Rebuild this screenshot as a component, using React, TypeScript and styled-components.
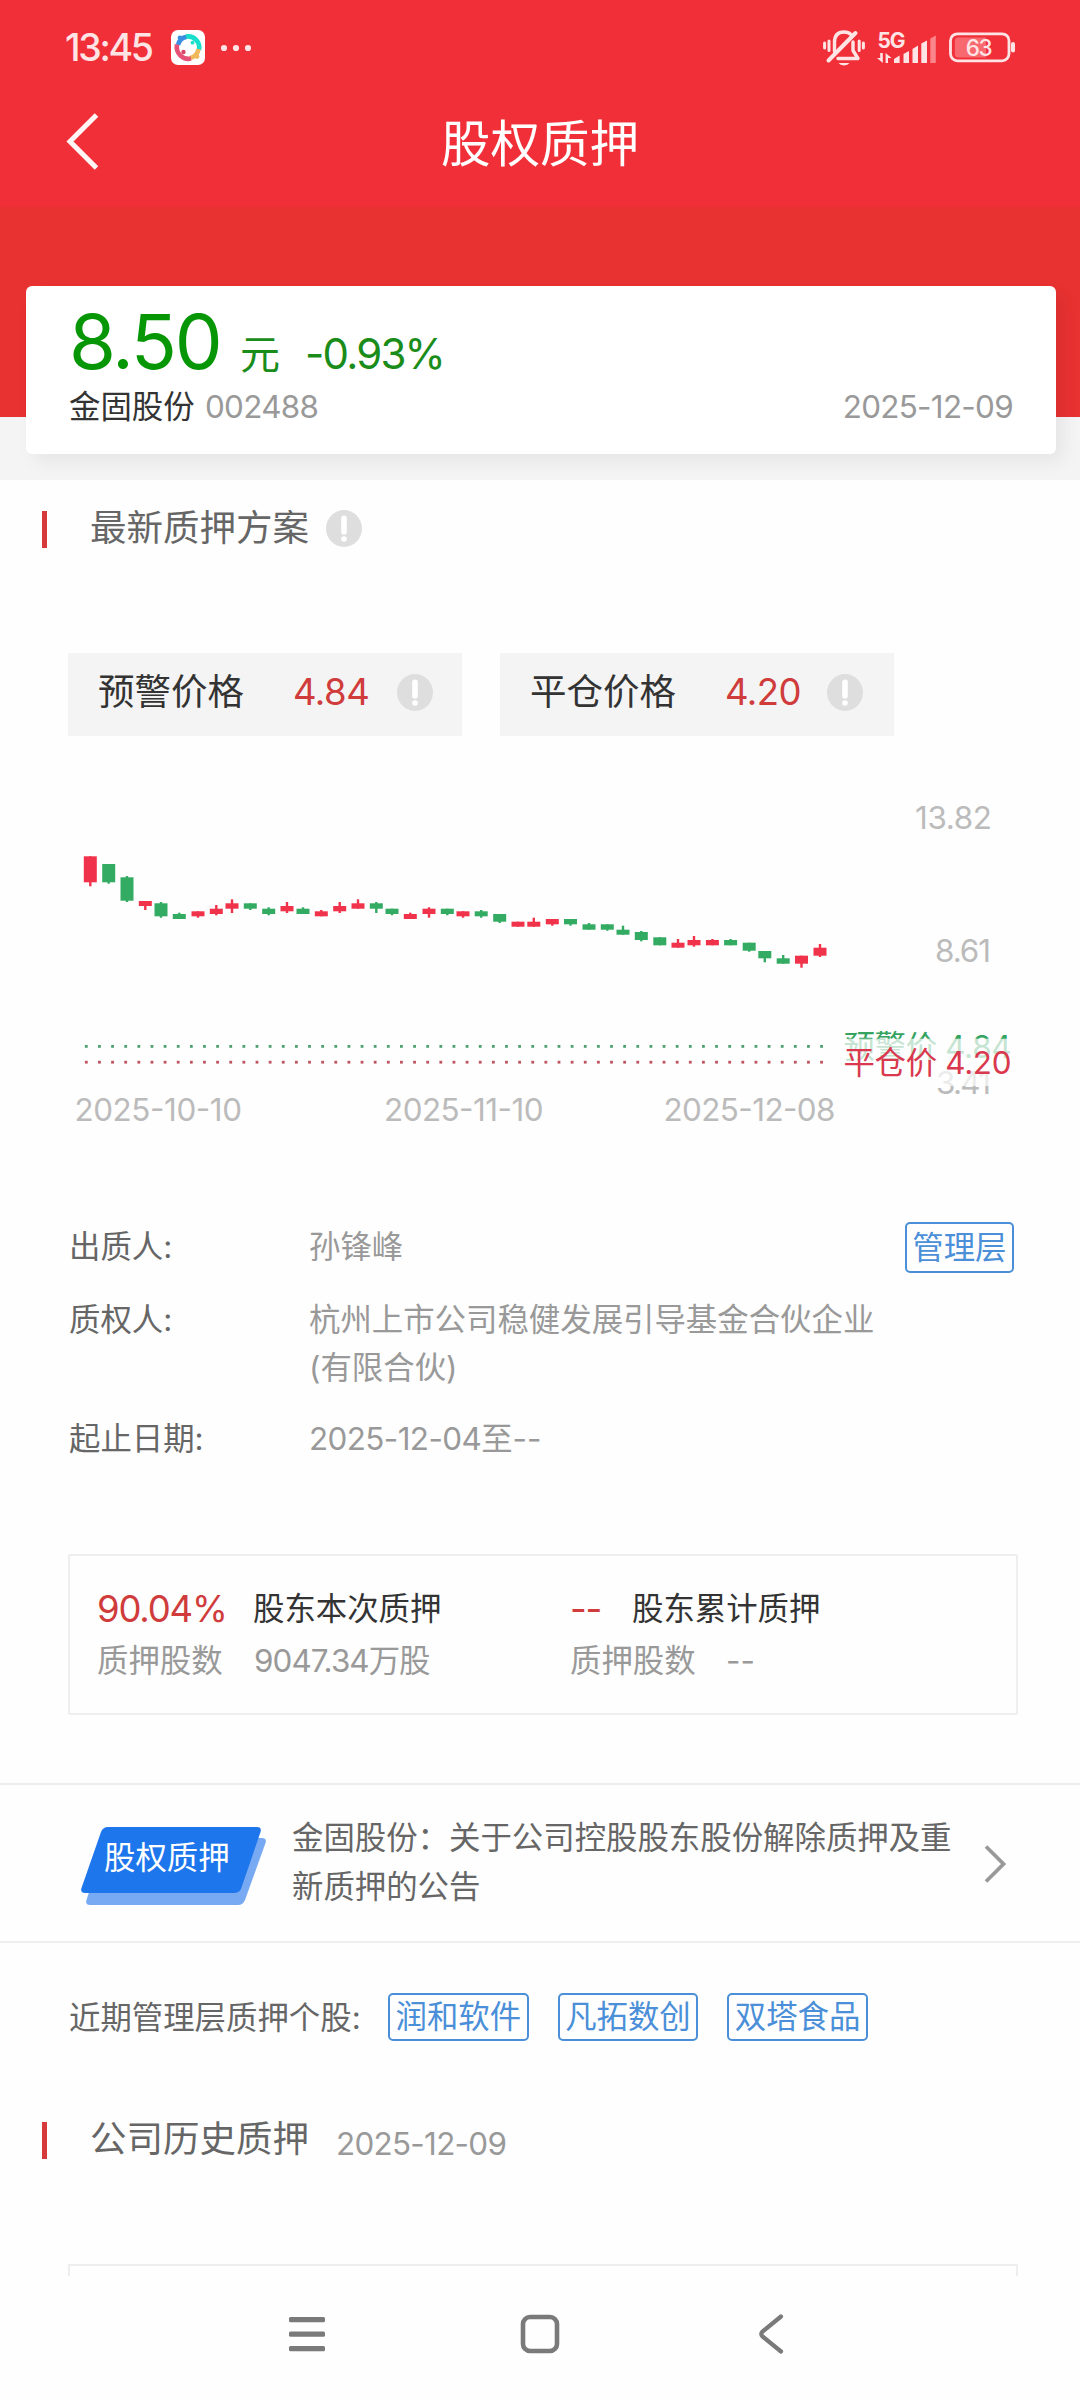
import React from "react";
import styled, { createGlobalStyle } from "styled-components";

const GlobalStyle = createGlobalStyle`
  * { box-sizing: border-box; }
  body {
    margin: 0;
    background: #fefefe;
    font-family: Inter, "Noto Sans CJK SC", sans-serif;
    font-size: 31.42px;
    color: #666;
  }
`;

const Screen = styled.div`
  width: 1080px;
  height: 2400px;
  overflow: hidden;
  display: flex;
  flex-direction: column;
  background: #fefefe;
  white-space: nowrap;
`;

/* ---------- header ---------- */

const Header = styled.header`
  height: 207px;
  background: #f12f38;
  color: #fff;
`;

const StatusBar = styled.div`
  height: 95px;
  padding: 0 64px 0 65px;
  display: flex;
  align-items: center;
  justify-content: space-between;
`;

const StatusGroup = styled.div<{ $gap: number }>`
  display: flex;
  align-items: center;
  gap: ${(p) => p.$gap}px;
`;

const Clock = styled.span`
  width: 91px;
  font-size: 37.5px;
  font-weight: 500;
  line-height: 40px;
  letter-spacing: -2.3px;
  color: #ffe4e6;
`;

const TitleBar = styled.div`
  height: 98px;
  display: grid;
  grid-template-columns: 150px 1fr 150px;
  align-items: center;
`;

const BackButton = styled.button`
  border: 0;
  background: none;
  padding: 0 0 4px 65px;
  line-height: 0;
  text-align: left;
`;

const Title = styled.h1`
  margin: 0;
  font-size: 49.5px;
  font-weight: 400;
  line-height: 60px;
  text-align: center;
`;

/* ---------- quote ---------- */

const Hero = styled.section`
  height: 273px;
  padding: 79px 24px 0 26px;
  background: linear-gradient(#e83131 0 210px, #f4f4f4 210px);
`;

const QuoteCard = styled.div`
  height: 168px;
  padding: 12px 43px 0 43px;
  border-radius: 6px;
  background: #fff;
  box-shadow: 8px 8px 18px rgba(0, 0, 0, 0.06);
`;

const PriceLine = styled.div`
  display: flex;
  align-items: baseline;
  height: 88px;
  line-height: 86px;
  color: #1a8c1a;
`;

const Price = styled.span`
  width: 171px;
  font-size: 76px;
  letter-spacing: -2.2px;
  color: #069606;
`;

const Unit = styled.span`
  width: 65px;
  font-size: 40px;
`;

const Change = styled.span`
  font-size: 42px;
  letter-spacing: -1.8px;
`;

const NameLine = styled.div`
  display: flex;
  align-items: center;
  height: 43px;
  line-height: 43px;
`;

const StockName = styled.span`
  width: 136px;
  color: #333;
`;

const Muted = styled.span<{ $spacing?: number }>`
  color: #999;
  letter-spacing: ${(p) => p.$spacing ?? 0}px;
`;

const QuoteDate = styled(Muted)`
  margin-left: auto;
`;

/* ---------- section heading ---------- */

const Heading = styled.h2<{ $top: number; $bottom: number }>`
  margin: ${(p) => p.$top}px 0 ${(p) => p.$bottom}px 42px;
  height: 37px;
  display: flex;
  align-items: center;
  font-weight: 400;
  &::before {
    content: "";
    width: 5px;
    height: 37px;
    margin-right: 43px;
    background: #d63a3a;
  }
`;

const HeadingText = styled.span`
  font-size: 36.5px;
  line-height: 36px;
  padding-bottom: 3px;
`;

const HeadingDate = styled(Muted)`
  margin: 6px 0 0 27px;
  font-size: 31.4px;
`;

const InfoIcon = styled.svg`
  width: 36px;
  height: 37px;
  display: block;
`;

const HeadingIcon = styled.div`
  margin: -2px 0 0 17px;
`;

/* ---------- price boxes ---------- */

const PriceBoxes = styled.div`
  display: flex;
  gap: 38px;
  margin-left: 68px;
`;

const PriceBox = styled.div`
  width: 394px;
  height: 83px;
  padding: 0 29px 5px 30px;
  display: flex;
  align-items: center;
  background: #f4f4f4;
  color: #333;
`;

const BoxLabel = styled.span`
  font-size: 36.5px;
  line-height: 40px;
  padding-bottom: 1px;
`;

const BoxValue = styled.span<{ $width: number }>`
  width: ${(p) => p.$width}px;
  margin-left: 49px;
  font-size: 36.5px;
  color: #d03b3b;
  letter-spacing: -0.5px;
`;

/* ---------- chart ---------- */

const ChartArea = styled.div`
  height: 412px;
  margin-top: 44px;
  svg { display: block; }
`;

/* ---------- details ---------- */

const Details = styled.dl`
  margin: 30px 66px 0 69px;
`;

const DetailRow = styled.div<{ $height: number }>`
  display: grid;
  grid-template-columns: 240px 1fr auto;
  height: ${(p) => p.$height}px;
  align-items: start;
  line-height: 48px;
`;

const DetailLabel = styled.dt`
  padding-top: 1px;
`;

const DetailValue = styled.dd`
  margin: 0;
  padding-top: 1px;
  color: #999;
`;

const Tag = styled.span<{ $height: number }>`
  height: ${(p) => p.$height}px;
  padding: 0 5.5px;
  display: flex;
  align-items: center;
  border: 2.4px solid #4a8fd8;
  border-radius: 5px;
  color: #4a8fd8;
  line-height: 40px;
`;

/* ---------- share summary ---------- */

const Summary = styled.section`
  width: 950px;
  height: 161px;
  margin: 91px 0 0 68px;
  padding: 27px 0 0 27px;
  border: 2px solid #eee;
  border-radius: 2px;
  display: grid;
  grid-template-columns: 473px 1fr;
  align-content: start;
`;

const Stat = styled.div<{ $first: number }>`
  display: grid;
  grid-template-columns: ${(p) => p.$first}px 1fr;
  align-items: center;
  height: 52px;
  line-height: 52px;
  color: #333;
`;

const StatSub = styled(Stat)`
  color: #999;
`;

const Percent = styled.span`
  font-size: 36.5px;
  letter-spacing: -1.2px;
  color: #d03b3b;
`;

/* ---------- announcement ---------- */

const News = styled.section`
  height: 160px;
  margin-top: 68px;
  padding: 0 73px 0 81px;
  display: flex;
  align-items: center;
  border-top: 2px solid #eee;
  border-bottom: 2px solid #eee;
`;

const Badge = styled.div`
  position: relative;
  width: 185px;
  height: 78px;
  margin: 5px 26px 0 0;
`;

const BadgeShape = styled.svg`
  position: absolute;
  inset: 0;
`;

const BadgeText = styled.span`
  position: relative;
  display: block;
  padding-left: 23px;
  line-height: 62px;
  color: #fff;
`;

const NewsText = styled.p`
  margin: 0 auto 0 0;
  line-height: 49px;
`;

/* ---------- related ---------- */

const Related = styled.section`
  height: 49px;
  margin: 49px 0 0 69px;
  display: flex;
  align-items: center;
`;

const RelatedLabel = styled.span`
  width: 319px;
  padding-bottom: 2px;
`;

const TagList = styled.div`
  display: flex;
  gap: 29px;
`;

const HistoryBox = styled.div`
  width: 950px;
  height: 12px;
  margin-left: 68px;
  border: 2px solid #eee;
  border-bottom: 0;
`;

const NavBar = styled.nav`
  height: 124px;
  padding: 38px 296px 0 288px;
  display: grid;
  grid-template-columns: 232px 1fr auto;
  align-items: start;
`;

/* ---------- drawings ---------- */

const Info = () => (
  <InfoIcon viewBox="0 0 36 37">
    <ellipse cx="18" cy="18.5" rx="18" ry="18.5" fill="#dedede" />
    <rect x="15.2" y="5.5" width="5.6" height="19" rx="2.6" fill="#fff" />
    <circle cx="18" cy="29" r="2.8" fill="#fff" />
  </InfoIcon>
);

const AppIcon = () => (
  <svg width="34" height="35" viewBox="0 0 34 35">
    <rect width="34" height="35" rx="7" fill="#fff" />
    <g fill="none" strokeWidth="4.6">
      <path d="M7 15 A11 11 0 0 1 16 6.8" stroke="#3b8fe0" />
      <path d="M15 6.6 A11.2 11.2 0 0 1 28 20" stroke="#18dfcb" />
      <path d="M27.5 19 A11 11 0 0 1 19 28" stroke="#efb95c" />
      <path d="M6 14.5 A12 12 0 0 0 20 28.6" stroke="#e65276" />
    </g>
    <circle cx="9" cy="8" r="2.4" fill="#3b8fe0" />
    <circle cx="26" cy="26.5" r="2.4" fill="#efb95c" />
    <circle cx="21.5" cy="12.7" r="1.9" fill="#18dfcb" />
    <circle cx="12.5" cy="22" r="2.2" fill="#d94468" />
  </svg>
);

const MoreDots = () => (
  <svg width="32" height="8" viewBox="0 0 32 8" fill="#ffe4e6">
    <circle cx="4" cy="4" r="3.1" />
    <circle cx="16" cy="4" r="3.1" />
    <circle cx="28" cy="4" r="3.1" />
  </svg>
);

const MuteIcon = () => (
  <svg width="42" height="38" viewBox="0 0 42 38" fill="none" stroke="#ffe4e6" strokeWidth="3.4" strokeLinecap="round">
    <path d="M11.5 22.5 V13.5 C11.5 6 15.5 3 21 3 C24 3 26.5 4 28 5.6" />
    <path d="M30 13 V21.5 L35 29.5 H15" strokeLinejoin="round" />
    <path d="M5.5 31.5 L32.5 4" strokeWidth="4" />
    <path d="M15.5 34 A6 4 0 0 0 26.5 34 Z" fill="#ffe4e6" stroke="none" />
    <path d="M1.6 14 V19 M6 12 V21.5 M36.2 12 V21.5 M40.4 14 V19" strokeWidth="3" />
  </svg>
);

const NetworkIcon = styled.svg`
  overflow: visible;
`;

const SignalIcon = () => (
  <NetworkIcon width="60" height="34" viewBox="0 0 60 34" fill="#ffe4e6">
    <text x="0.5" y="17" fontSize="21" fontWeight="700" letterSpacing="-1.2" fontFamily="Inter, sans-serif">5G</text>
    <path d="M3.2 22 H5.8 V32 L0 27 H3.2 Z M8.6 22 L14.6 27 H11 V32 H8.6 Z" />
    <path d="M17 28 L22.6 24.5 V32 H17 Z M26.5 23 L32 20 V32 H26.5 Z M35.5 18 L41 14.5 V32 H35.5 Z M44.3 12.5 L50 9.5 V32 H44.3 Z" />
    <path d="M53.3 7.5 L58.8 4.5 V32 H53.3 Z" fill="#fa858b" />
  </NetworkIcon>
);

const BatteryIcon = () => (
  <svg width="67" height="31" viewBox="0 0 67 31">
    <rect x="1.5" y="1.8" width="58.5" height="27" rx="7" fill="none" stroke="#ffe4e6" strokeWidth="2.8" />
    <path d="M9 5.5 H37 V25.5 H9 Q5.8 25.5 5.8 22 V9 Q5.8 5.5 9 5.5 Z" fill="#f7696f" />
    <rect x="62" y="10" width="4" height="10.5" rx="2" fill="#ffe4e6" />
    <text x="29.5" y="23.5" textAnchor="middle" fontSize="22.5" fontWeight="500" letterSpacing="-1.4" fontFamily="Inter, sans-serif" fill="#ffe4e6">63</text>
  </svg>
);

/* x centre, body top, body bottom, wick top, wick bottom, rising */
type Candle = [number, number, number, number, number, boolean];

const candles: Candle[] = [
  [90.3, 76.3, 102.3, 76.3, 106.3, true],
  [108.7, 84, 102.3, 84, 103.7, false],
  [127, 97.3, 120.7, 96, 122, false],
  [145.3, 121, 126, 121, 130, true],
  [161, 123.3, 136.3, 122, 137.7, false],
  [179.3, 134, 139, 132.7, 139, false],
  [198, 131.3, 136.3, 131.3, 137.7, true],
  [216.3, 128.7, 134, 125, 135.3, true],
  [232, 123.3, 128.7, 119.3, 133, true],
  [250.3, 123.3, 128.7, 123.3, 130, false],
  [268.7, 128.7, 134, 127.3, 135.3, false],
  [287, 126, 131.3, 122, 133, true],
  [303, 128.7, 134, 127.3, 134, false],
  [321.3, 131.3, 136.3, 130, 136.3, true],
  [339.7, 126, 131.3, 122, 133, true],
  [358, 123.3, 128.7, 119.3, 128.7, true],
  [376.3, 123.3, 128.7, 122, 133, false],
  [392, 128.7, 134, 128.7, 135.3, false],
  [410.3, 134, 139, 132.7, 139, true],
  [429, 128.7, 134, 127.3, 137.7, true],
  [447.3, 128.7, 134, 128.7, 135.3, false],
  [463, 131.3, 136.3, 131.3, 137.7, true],
  [481.2, 131.3, 136.3, 130, 137.7, false],
  [499.7, 134, 141.7, 134, 143, false],
  [518, 141.7, 146.7, 141.7, 146.7, true],
  [533.8, 141.7, 146.7, 137.7, 146.7, true],
  [552.3, 139, 144.3, 139, 145.7, true],
  [570.5, 139, 144.3, 139, 145.7, false],
  [589, 144.3, 149.7, 143, 149.7, false],
  [607.3, 144.3, 149.7, 144.3, 150.7, false],
  [623, 149.7, 154.7, 145.7, 154.7, false],
  [641.3, 152, 160, 151, 161.3, false],
  [659.8, 157.3, 165.3, 157.3, 165.3, false],
  [678, 162.7, 167.7, 159, 167.7, true],
  [694, 160, 165.3, 156, 166.7, true],
  [712.4, 160, 165.3, 159, 165.3, true],
  [730.6, 160, 165.3, 159, 165.3, false],
  [749.2, 162.7, 170.7, 162.7, 171.7, false],
  [764.8, 171, 178.3, 171, 182.3, false],
  [783.2, 178.3, 183.7, 175, 183.7, false],
  [801.5, 175.7, 183.7, 175.7, 187.7, true],
  [820, 167.7, 175.7, 164, 177, true],
];

const dots = Array.from({ length: 57 }, (_, i) => 86.3 + i * 13.13);

const Chart = () => (
  <svg width="1080" height="412" viewBox="0 0 1080 412" fontFamily='Inter, "Noto Sans CJK SC", sans-serif' fontSize="31.4">
    {candles.map(([x, top, bottom, high, low, up]) => (
      <g key={x} fill={up ? "#f0324b" : "#33ab62"}>
        <rect x={x - 6.5} y={top} width="13" height={bottom - top} />
        <rect x={x - 1.2} y={high} width="2.4" height={low - high} />
      </g>
    ))}
    {dots.map((x) => (
      <g key={x}>
        <rect x={x - 1.4} y="265" width="2.8" height="2.8" fill="#4fa071" />
        <rect x={x - 1.4} y="280.8" width="2.8" height="2.8" fill="#bd5560" />
      </g>
    ))}
    <g fill="#bbb">
      <text x="915" y="48.8" textLength="77" lengthAdjust="spacing">13.82</text>
      <text x="935" y="181.8" textLength="56" lengthAdjust="spacing">8.61</text>
      <text x="936" y="313.8" textLength="55" lengthAdjust="spacing">3.41</text>
      <text x="74.5" y="341" textLength="167.5" lengthAdjust="spacing">2025-10-10</text>
      <text x="384" y="341" textLength="159.5" lengthAdjust="spacing">2025-11-10</text>
      <text x="663.5" y="341" textLength="172" lengthAdjust="spacing">2025-12-08</text>
    </g>
    <rect x="840" y="243" width="173" height="47" fill="#fefefe" fillOpacity="0.7" />
    <text x="843.5" y="278" textLength="168" lengthAdjust="spacing" fill="#33a35f">预警价 4.84</text>
    <rect x="840" y="258.7" width="173" height="47.3" fill="#fefefe" fillOpacity="0.72" />
    <text x="843.5" y="294" textLength="168" lengthAdjust="spacing" fill="#d9384e">平仓价 4.20</text>
  </svg>
);

export default function App() {
  return (
    <Screen>
      <GlobalStyle />
      <Header>
        <StatusBar>
          <StatusGroup $gap={15}>
            <Clock>13:45</Clock>
            <AppIcon />
            <MoreDots />
          </StatusGroup>
          <StatusGroup $gap={12}>
            <MuteIcon />
            <SignalIcon />
            <BatteryIcon />
          </StatusGroup>
        </StatusBar>
        <TitleBar>
          <BackButton aria-label="返回">
            <svg width="36" height="60" viewBox="0 0 36 60" fill="none" stroke="#fff5f5" strokeWidth="5">
              <path d="M31.5 3 L5 29.5 L31.5 56" />
            </svg>
          </BackButton>
          <Title>股权质押</Title>
        </TitleBar>
      </Header>

      <Hero>
        <QuoteCard>
          <PriceLine>
            <Price>8.50</Price>
            <Unit>元</Unit>
            <Change>-0.93%</Change>
          </PriceLine>
          <NameLine>
            <StockName>金固股份</StockName>
            <Muted $spacing={-0.7}>002488</Muted>
            <QuoteDate $spacing={-0.7}>2025-12-09</QuoteDate>
          </NameLine>
        </QuoteCard>
      </Hero>

      <Heading $top={31} $bottom={105}>
        <HeadingText>最新质押方案</HeadingText>
        <HeadingIcon><Info /></HeadingIcon>
      </Heading>

      <PriceBoxes>
        <PriceBox><BoxLabel>预警价格</BoxLabel><BoxValue $width={104}>4.84</BoxValue><Info /></PriceBox>
        <PriceBox><BoxLabel>平仓价格</BoxLabel><BoxValue $width={102}>4.20</BoxValue><Info /></PriceBox>
      </PriceBoxes>

      <ChartArea><Chart /></ChartArea>

      <Details>
        <DetailRow $height={73}>
          <DetailLabel>出质人:</DetailLabel>
          <DetailValue>孙锋峰</DetailValue>
          <Tag $height={51}>管理层</Tag>
        </DetailRow>
        <DetailRow $height={119}>
          <DetailLabel>质权人:</DetailLabel>
          <DetailValue>杭州上市公司稳健发展引导基金合伙企业<br />(有限合伙)</DetailValue>
        </DetailRow>
        <DetailRow $height={49}>
          <DetailLabel>起止日期:</DetailLabel>
          <DetailValue><Muted $spacing={-0.6}>2025-12-04</Muted>至--</DetailValue>
        </DetailRow>
      </Details>

      <Summary>
        <Stat $first={156}><Percent>90.04%</Percent>股东本次质押</Stat>
        <Stat $first={62}><Percent>--</Percent>股东累计质押</Stat>
        <StatSub $first={157}><span>质押股数</span><Muted $spacing={-0.95}>9047.34万股</Muted></StatSub>
        <StatSub $first={156}><span>质押股数</span>--</StatSub>
      </Summary>

      <News>
        <Badge>
          <BadgeShape width="185" height="78" viewBox="0 0 185 78">
            <path d="M30 11 H181 Q186 11 184.5 16 L164 73 Q162 78 157 78 H9 Q4 78 5.5 73 L24 15 Q26 11 30 11 Z" fill="#78aaf3" />
            <path d="M27 0 H176 Q181 0 179.5 5 L160 62 Q158 66 153 66 H4 Q-1 66 0.5 61 L20 5 Q22 0 27 0 Z" fill="#1e76ec" />
          </BadgeShape>
          <BadgeText>股权质押</BadgeText>
        </Badge>
        <NewsText>金固股份：关于公司控股股东股份解除质押及重<br />新质押的公告</NewsText>
        <svg width="24" height="40" viewBox="0 0 24 40" fill="none" stroke="#999" strokeWidth="3.8">
          <path d="M3 3.5 L20.5 21 L3 38.5" />
        </svg>
      </News>

      <Related>
        <RelatedLabel>近期管理层质押个股:</RelatedLabel>
        <TagList>
          <Tag $height={48}>润和软件</Tag>
          <Tag $height={48}>凡拓数创</Tag>
          <Tag $height={48}>双塔食品</Tag>
        </TagList>
      </Related>

      <Heading $top={81} $bottom={105}>
        <HeadingText>公司历史质押</HeadingText>
        <HeadingDate $spacing={-0.7}>2025-12-09</HeadingDate>
      </Heading>
      <HistoryBox />

      <NavBar>
        <svg width="38" height="40" viewBox="0 0 38 40" fill="#7a7a7a">
          <rect x="1" y="3" width="36" height="5.3" rx="1.5" />
          <rect x="1" y="17.5" width="36" height="5.3" rx="1.5" />
          <rect x="1" y="32" width="36" height="5.3" rx="1.5" />
        </svg>
        <svg width="40" height="40" viewBox="0 0 40 40" fill="none" stroke="#7a7a7a" strokeWidth="4.6">
          <rect x="3" y="3" width="34" height="34" rx="7" />
        </svg>
        <svg width="26" height="40" viewBox="0 0 26 40" fill="none" stroke="#7a7a7a" strokeWidth="4.2" strokeLinecap="round">
          <path d="M23 2.5 L4.5 17.5 Q2 20 4.5 22.5 L23 37.5" />
        </svg>
      </NavBar>
    </Screen>
  );
}
